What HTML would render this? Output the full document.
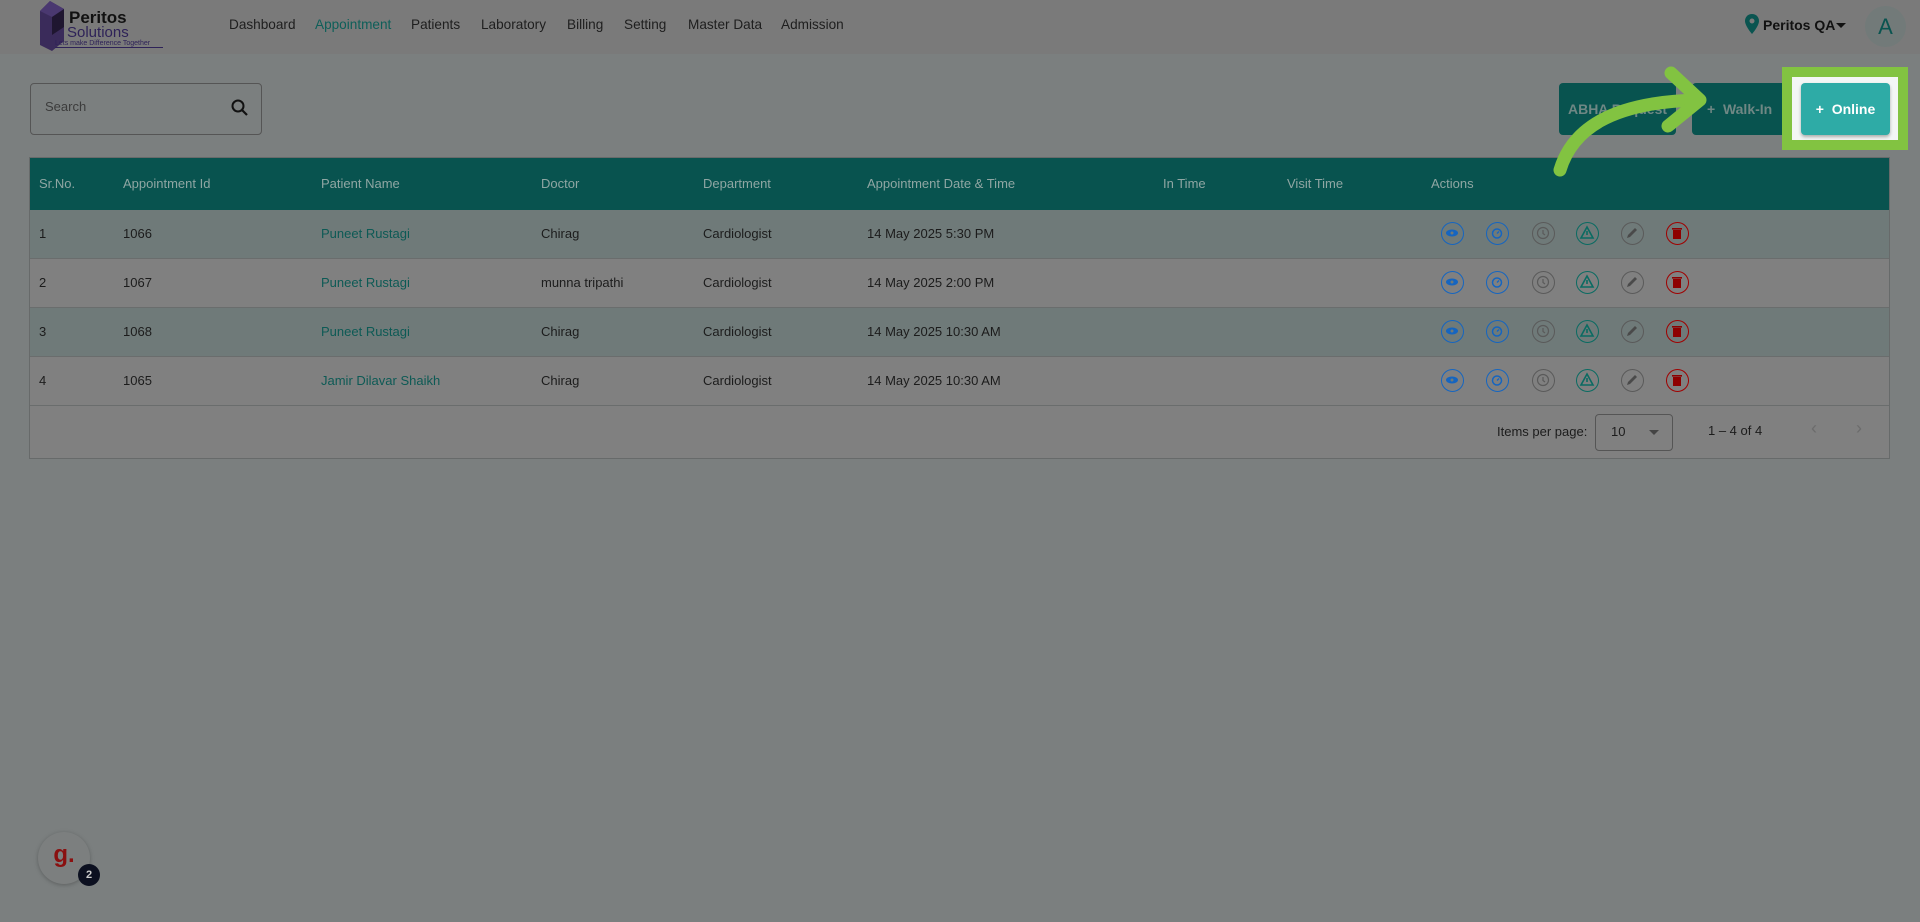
<!DOCTYPE html>
<html><head><meta charset="utf-8"><style>
*{box-sizing:border-box;margin:0;padding:0}
body{width:1920px;height:922px;background:#7b7f7f;font-family:"Liberation Sans",sans-serif;position:relative;overflow:hidden;color:#1c1c1c}
.hdr{position:absolute;left:0;top:0;width:1920px;height:54px;background:#7a7a7a}
.nav{position:absolute;top:17px;font-size:13.6px;color:#1e1e1e}
.abs{position:absolute}
.tbl{position:absolute;left:29px;top:157px;width:1861px;height:302px;border:1px solid #676a6a;background:#808080}
.th{position:absolute;left:0;top:0;width:100%;height:52px;background:#08534f}
.th span{position:absolute;top:18px;font-size:13px;color:#8fa6a3}
.row{position:absolute;left:0;width:100%;height:49px;border-bottom:1px solid #6a6d6d}
.row span{position:absolute;top:16px;font-size:13px;color:#1c1c1c}
.row span.l{color:#0d5a55}
.ic{position:absolute;top:12px;width:23px;height:23px;border-radius:50%;border:1.5px solid}
.btn{position:absolute;top:83px;height:52px;border-radius:4px;background:#08534f;color:#6f8784;font-size:14px;font-weight:bold;line-height:52px}
</style></head><body>
<div class="hdr"></div>
<svg class="abs" style="left:38px;top:1px" width="28" height="50"><polygon points="2,10 12,0 26,8 26,40 14,50 2,44" fill="#3a2b5a"/><polygon points="2,10 12,0 26,8 14,16" fill="#4a3870"/><polygon points="14,16 26,8 26,26 14,34" fill="#1f1630"/></svg>
<div class="abs" style="left:69px;top:9px;font-size:17px;line-height:17px;color:#111;font-weight:bold">Peritos</div>
<div class="abs" style="left:67px;top:25px;font-size:15px;line-height:15px;color:#2e2258">Solutions</div>
<div class="abs" style="left:55px;top:40px;font-size:7px;color:#2e2258;border-bottom:1px solid #2e2258;width:108px">Lets make Difference Together</div>
<div class="nav" style="left:229px">Dashboard</div>
<div class="nav" style="left:315px;color:#0e5f59">Appointment</div>
<div class="nav" style="left:411px">Patients</div>
<div class="nav" style="left:481px">Laboratory</div>
<div class="nav" style="left:567px">Billing</div>
<div class="nav" style="left:624px">Setting</div>
<div class="nav" style="left:688px">Master Data</div>
<div class="nav" style="left:781px">Admission</div>
<svg class="abs" style="left:1745px;top:14px" width="14" height="20"><path d="M7 0C3 0 0 3 0 7c0 5 7 13 7 13s7-8 7-13c0-4-3-7-7-7z" fill="#0a5450"/><circle cx="7" cy="7" r="2.5" fill="#7a7a7a"/></svg>
<div class="abs" style="left:1763px;top:17px;font-size:14px;font-weight:bold;color:#111">Peritos QA</div>
<div class="abs" style="left:1836px;top:23px;border:5px solid transparent;border-top-color:#111"></div>
<div class="abs" style="left:1865px;top:6px;width:41px;height:41px;border-radius:50%;background:#727a79;color:#0a5450;font-size:22px;text-align:center;line-height:41px">A</div>

<div class="abs" style="left:30px;top:83px;width:232px;height:52px;border:1px solid #555;border-radius:4px"></div>
<div class="abs" style="left:45px;top:99px;font-size:13px;color:#3c3c3c">Search</div>
<svg class="abs" style="left:230px;top:98px" width="20" height="20"><circle cx="8" cy="8" r="5.5" fill="none" stroke="#111" stroke-width="2"/><line x1="12" y1="12" x2="17" y2="17" stroke="#111" stroke-width="2.2"/></svg>

<div class="btn" style="left:1559px;width:117px;text-align:center">ABHA Request</div>
<div class="btn" style="left:1692px;width:110px;padding-left:15px">+&nbsp;&nbsp;Walk-In</div>
<div class="abs" style="left:1782px;top:67px;width:126px;height:83px;background:#82c341"></div>
<div class="abs" style="left:1792px;top:77px;width:106px;height:63px;background:#f3f6f5"></div>
<div class="btn" style="left:1801px;width:89px;background:#2eaba6;color:#fff;text-align:center;box-shadow:0 2px 3px rgba(0,0,0,.3)">+&nbsp;&nbsp;Online</div>

<div class="tbl">
<div class="th"><span style="left:9px">Sr.No.</span><span style="left:93px">Appointment Id</span><span style="left:291px">Patient Name</span><span style="left:511px">Doctor</span><span style="left:673px">Department</span><span style="left:837px">Appointment Date &amp; Time</span><span style="left:1133px">In Time</span><span style="left:1257px">Visit Time</span><span style="left:1401px">Actions</span></div>
<div class="row" style="top:52px;background:#6f7a79"><span style="left:9px">1</span><span style="left:93px">1066</span><span class="l" style="left:291px">Puneet Rustagi</span><span style="left:511px">Chirag</span><span style="left:673px">Cardiologist</span><span style="left:837px">14 May 2025 5:30 PM</span>ICONS</div>
<div class="row" style="top:101px;background:#808080"><span style="left:9px">2</span><span style="left:93px">1067</span><span class="l" style="left:291px">Puneet Rustagi</span><span style="left:511px">munna tripathi</span><span style="left:673px">Cardiologist</span><span style="left:837px">14 May 2025 2:00 PM</span>ICONS</div>
<div class="row" style="top:150px;background:#6f7a79"><span style="left:9px">3</span><span style="left:93px">1068</span><span class="l" style="left:291px">Puneet Rustagi</span><span style="left:511px">Chirag</span><span style="left:673px">Cardiologist</span><span style="left:837px">14 May 2025 10:30 AM</span>ICONS</div>
<div class="row" style="top:199px;background:#808080"><span style="left:9px">4</span><span style="left:93px">1065</span><span class="l" style="left:291px">Jamir Dilavar Shaikh</span><span style="left:511px">Chirag</span><span style="left:673px">Cardiologist</span><span style="left:837px">14 May 2025 10:30 AM</span>ICONS</div>
<div class="abs" style="left:1467px;top:266px;font-size:13px">Items per page:</div>
<div class="abs" style="left:1565px;top:256px;width:78px;height:37px;border:1px solid #555;border-radius:4px"></div>
<div class="abs" style="left:1581px;top:266px;font-size:13px">10</div>
<div class="abs" style="left:1619px;top:272px;border:5px solid transparent;border-top-color:#444"></div>
<div class="abs" style="left:1678px;top:265px;font-size:13px">1 – 4 of 4</div>
<div class="abs" style="left:1781px;top:260px;font-size:18px;color:#6c6c6c">‹</div>
<div class="abs" style="left:1826px;top:260px;font-size:18px;color:#6c6c6c">›</div>
</div>
<svg class="abs" style="left:1540px;top:60px;z-index:5" width="180" height="125"><path d="M20 110C32 70 70 42 158 40" fill="none" stroke="#82c341" stroke-width="13" stroke-linecap="round"/><path d="M131 13L160 40L128 66" fill="none" stroke="#82c341" stroke-width="13" stroke-linecap="round" stroke-linejoin="round"/></svg>

<div class="abs" style="left:38px;top:832px;width:52px;height:52px;border-radius:50%;background:#7c7f7f;box-shadow:0 1px 4px rgba(0,0,0,.25);color:#8a1010;font-size:24px;font-weight:bold;text-align:center;line-height:46px">g.</div>
<div class="abs" style="left:78px;top:864px;width:22px;height:22px;border-radius:50%;background:#0c1020;color:#ccc;font-size:11px;font-weight:bold;text-align:center;line-height:22px">2</div>
<script>
var ic='';
var cs=[['#1565c0','<ellipse cx="10" cy="10" rx="6" ry="3.5" fill="#1565c0"/><circle cx="10" cy="10" r="1.5" fill="#6f7a79"/>'],
['#1565c0','<circle cx="10" cy="10.5" r="4.5" fill="none" stroke="#1565c0" stroke-width="1.5"/><line x1="10" y1="10.5" x2="12" y2="8.5" stroke="#1565c0" stroke-width="1.3"/>'],
['#5a5a5a','<circle cx="10" cy="10" r="5.5" fill="none" stroke="#5a5a5a" stroke-width="1.2"/><path d="M10 7v3.5l2 1.5" fill="none" stroke="#5a5a5a" stroke-width="1.2"/>'],
['#0a6b62','<path d="M10 4L16 15H4z" fill="none" stroke="#0a6b62" stroke-width="1.6"/><line x1="10" y1="8" x2="10" y2="12" stroke="#0a6b62" stroke-width="1.6"/>'],
['#5a5a5a','<path d="M5 15l1-3 7-7 2 2-7 7z" fill="#4a4a4a"/>'],
['#a00000','<rect x="6" y="7" width="8" height="9" fill="#8e0000"/><rect x="5" y="5" width="10" height="1.6" fill="#8e0000"/>']];
var xs=[1452,1497,1543,1587,1632,1677];
for(var i=0;i<6;i++){ic+='<div class="ic" style="left:'+(xs[i]-29-12)+'px;border-color:'+cs[i][0]+'"><svg width="20" height="20">'+cs[i][1]+'</svg></div>';}
document.querySelectorAll('.row').forEach(function(r){r.innerHTML=r.innerHTML.replace('ICONS',ic);});
</script>
</body></html>
